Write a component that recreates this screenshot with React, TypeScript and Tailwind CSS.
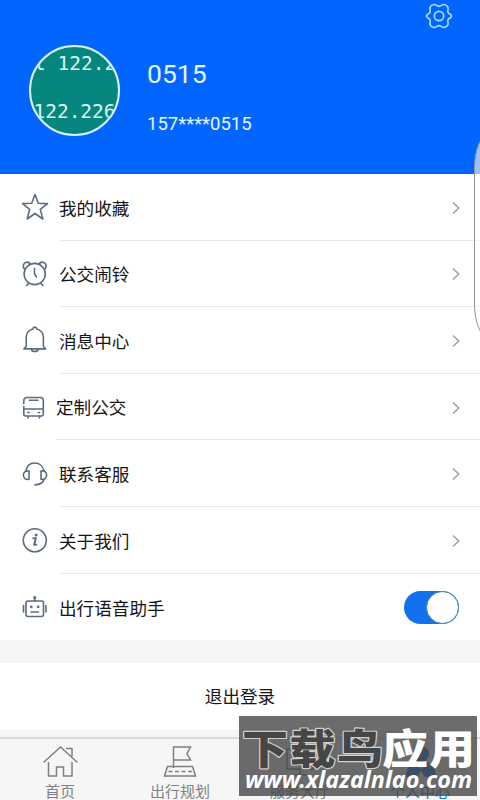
import type { ReactNode } from "react";

const iconProps = {
  viewBox: "0 0 28 28",
  fill: "none",
  stroke: "#5d6b80",
  strokeWidth: 1.6,
  strokeLinecap: "round" as const,
  strokeLinejoin: "round" as const,
  className: "h-7 w-7",
};

function StarIcon() {
  return (
    <svg {...iconProps}>
      <path d="M14 1.5 17.3 10.2 26.5 10.6 19.3 16.4 21.8 26 14 20.5 6.2 26 8.7 16.4 1.5 10.6 10.7 10.2Z" />
    </svg>
  );
}

function AlarmIcon() {
  return (
    <svg {...iconProps}>
      <circle cx="13.7" cy="14" r="10.6" />
      <path d="M13.5 8.5v5.500l2 3M7.300 23.600 5.600 25.500M20.100 23.600l1.700 1.900" />
      <path d="M3.200 8.800C1.300 5.900 2.500 2.500 5.900 2.100c1.600 0 2.900.7 3.600 2M24.200 8.800c1.900-2.900.7-6.300-2.700-6.700-1.600 0-2.900.7-3.600 2" />
    </svg>
  );
}

function BellIcon() {
  return (
    <svg {...iconProps}>
      <path d="M5.200 20.500V11.500a8.900 8.900 0 0 1 6.600-8.600c.2-2.400 3.800-2.400 4 0a8.900 8.900 0 0 1 6.600 8.600v9l2.300 2.400H2.900Z" />
      <path d="M10.300 23.200c.8 3 6.200 3 7 0" />
    </svg>
  );
}

function BusIcon() {
  return (
    <svg {...iconProps} viewBox="0 -1.500 28 28">
      <path d="M2.800 9V6a3 3 0 0 1 3-3h13.500a3 3 0 0 1 3 3v13.500a2 2 0 0 1-2 2H4.800a2 2 0 0 1-2-2v-5h19.500M2.800 12v2.500" />
      <path d="M8.500 5.800h8.500M6.700 18h1.400M17.200 18h1.400M7 22v1.500M18.500 22v1.500" />
    </svg>
  );
}

function HeadsetIcon() {
  return (
    <svg {...iconProps} viewBox="0 -0.500 28 28">
      <path d="M5 10.300C5.800 5.300 9.400 2.500 13.800 2.500s8.200 2.800 9 7.800" />
      <path d="M8 10.500v8.300c-3.300.6-5.600-1-5.600-4.200S4.700 9.900 8 10.500ZM20 10.500v8.300c3.300.6 5.600-1 5.600-4.200s-2.300-4.700-5.600-4.100Z" />
      <path d="M23 18.800c-.8 3.500-3.800 5.400-9 5.600" />
    </svg>
  );
}

function InfoIcon() {
  return (
    <svg {...iconProps} viewBox="0 -0.500 28 28">
      <circle cx="13.800" cy="13.700" r="11.500" />
      <path d="M12.300 11.800h2.500l-1.600 6.500h2" strokeWidth="2" />
      <circle cx="15.200" cy="8.600" r="0.700" fill="#5d6b80" />
    </svg>
  );
}

function RobotIcon() {
  return (
    <svg {...iconProps} viewBox="0 -1.500 28 28">
      <rect x="5" y="6.500" width="17.500" height="15.500" rx="2" />
      <path d="M13.700 6.500V4M2.500 11v6.500M25 11v6.500M10 17.500h7.500" />
      <circle cx="13.700" cy="3" r="0.800" fill="#5d6b80" />
      <circle cx="10.300" cy="12.300" r="0.600" fill="#5d6b80" />
      <circle cx="17.200" cy="12.300" r="0.600" fill="#5d6b80" />
    </svg>
  );
}

function Chevron() {
  return (
    <svg viewBox="0 0 8 14" fill="none" stroke="#a3a3a3" strokeWidth="1.600" className="mr-[20px] h-[14px] w-2">
      <path d="M1 1.500 6.700 7 1 12.500" />
    </svg>
  );
}

function SettingsIcon() {
  return (
    <svg viewBox="0 0 28 28" fill="none" stroke="#a5dcff" strokeWidth="1.700" strokeLinejoin="round" className="h-7 w-7">
      <path d="M9.500 2.500c1.700 0 2.400 1.800 4.500 1.800s2.800-1.800 4.500-1.800c1.800 0 4 1.500 4.500 3 .6 1.800-.8 2.700 0 4.700.8 2 3.500 1.700 3.500 3.800s-2.700 1.800-3.500 3.800.6 2.900 0 4.700c-.5 1.500-2.700 3-4.500 3-1.700 0-2.400-1.800-4.500-1.800s-2.800 1.800-4.500 1.800c-1.800 0-4-1.500-4.500-3-.6-1.800.8-2.700 0-4.700S1.500 16.100 1.500 14s2.700-1.800 3.500-3.800-.6-2.900 0-4.700c.5-1.500 2.700-3 4.500-3Z" />
      <circle cx="14" cy="14" r="4.700" />
    </svg>
  );
}

const rows: { label: string; icon: ReactNode; tight?: boolean; toggle?: boolean }[] = [
  { label: "我的收藏", icon: <StarIcon /> },
  { label: "公交闹铃", icon: <AlarmIcon /> },
  { label: "消息中心", icon: <BellIcon /> },
  { label: "定制公交", icon: <BusIcon />, tight: true },
  { label: "联系客服", icon: <HeadsetIcon /> },
  { label: "关于我们", icon: <InfoIcon /> },
  { label: "出行语音助手", icon: <RobotIcon />, toggle: true },
];

function NavItem({ label, icon, active }: { label: string; icon: ReactNode; active?: boolean }) {
  return (
    <div className={`flex flex-1 flex-col items-center pt-[5px] text-[15px] leading-[18px] ${active ? "text-[#0870d8]" : "text-[#808080]"}`}>
      <div className="mb-[3px] h-[36px] w-[36px]">{icon}</div>
      <span className="whitespace-nowrap">{label}</span>
    </div>
  );
}

function BottomNav() {
  const nav = {
    viewBox: "0 0 36 36",
    fill: "none",
    stroke: "currentColor",
    strokeWidth: 1.5,
    className: "h-9 w-9",
  };

  return (
    <nav className="flex h-[63px] border-t-2 border-[#d9d9d9] bg-[#f6f6f6]">
      <NavItem
        label="首页"
        icon={
          <svg {...nav}>
            <path d="M1.500 18.500 18.500 3l17 15.500M6.500 18v14h8v-9h7v9h8.500V18M24 4.500h6v8" />
          </svg>
        }
      />
      <NavItem
        label="出行规划"
        icon={
          <svg {...nav}>
            <path d="M11.500 24V3h17l-3.500 6.500 3.500 6.500h-17M5.500 22.500h25l3 9.500h-31Z" />
            <path d="M6.500 27.500h24" strokeDasharray="4 2.500" />
          </svg>
        }
      />
      <NavItem
        label="服务大厅"
        icon={
          <svg {...nav}>
            <path d="M5 5h26v20H5ZM18 25v6M11 31h14" />
          </svg>
        }
      />
      <NavItem
        label="个人中心"
        active
        icon={
          <svg viewBox="0 0 36 36" fill="currentColor" className="h-9 w-9">
            <circle cx="19" cy="10" r="8" />
            <path d="M4 33c0-7 3-12 8-15l7 7 7-7c5 3 8 8 8 15h-11l-4-6-4 6Z" />
          </svg>
        }
      />
    </nav>
  );
}

function Watermark() {
  return (
    <div className="absolute top-[716px] left-[239px] h-[80px] w-[238px] bg-[#474747]/80">
      <svg viewBox="0 0 238 80" className="h-full w-full">
        <g
          transform="translate(0 48) scale(1 .88)"
          fontFamily="'Noto Sans CJK SC', sans-serif"
          fontWeight="900"
          fontSize="46"
          strokeLinejoin="round"
        >
          <text x="3" y="0" textLength="141" fill="#464646" stroke="#d0d0d0" strokeWidth="2.600" paintOrder="stroke">下载鸟</text>
          <text x="143" y="0" textLength="93" fill="#fff">应用</text>
        </g>
        <text
          x="6"
          y="72"
          textLength="227"
          lengthAdjust="spacingAndGlyphs"
          fontFamily="'Noto Sans', sans-serif"
          fontWeight="700"
          fontStyle="italic"
          fontSize="24"
          fill="#fff"
        >
          www.xlazalnlao.com
        </text>
      </svg>
    </div>
  );
}

export default function App() {
  return (
    <main className="relative flex h-[800px] w-[480px] flex-col overflow-hidden bg-[#f5f5f5] font-['Roboto','Noto_Sans_CJK_SC',sans-serif] text-[#151515]">
      <header className="flex h-[174px] shrink-0 bg-[#0266fe] text-[#e4f6ff]">
        <div className="mt-[45px] ml-[29px] flex h-[91px] w-[91px] flex-col items-center overflow-hidden rounded-full border-2 border-[#d5f5f5] bg-[#07857f] font-['DejaVu_Sans_Mono',monospace] text-[19.500px] leading-[48px] whitespace-pre text-[#d8f5ee]">
          <span className="-mt-[7px] ml-[13px]">t 122.22</span>
          <span>122.226</span>
        </div>

        <div className="ml-[27px] flex-1">
          <p className="mt-[58px] text-[26.500px] leading-8">0515</p>
          <p className="mt-[22px] text-[18.500px] leading-6">157****0515</p>
        </div>

        <div className="mt-[2px] mr-[27px]">
          <SettingsIcon />
        </div>
      </header>

      <section className="shrink-0 bg-white">
        {rows.map((row) => (
          <div key={row.label} className="flex h-[66.600px] items-center pl-[21px]">
            {row.icon}
            <div
              className={`flex h-full flex-1 items-center justify-between text-[17.600px] ${
                row.tight ? "ml-[7px]" : "ml-[10px]"
              } ${row.toggle ? "pt-[2px]" : "border-b border-[#e8e8e8] pt-[2px]"}`}
            >
              <span className="pt-[2px]">{row.label}</span>
              {row.toggle ? (
                <div className="mr-[21px] flex h-[33px] w-[55px] justify-end rounded-full bg-[#1171ee]">
                  <div className="h-[33px] w-[33px] rounded-full border border-[#4d7fac] bg-white" />
                </div>
              ) : (
                <Chevron />
              )}
            </div>
          </div>
        ))}
      </section>

      <button className="mt-[23px] h-[67px] shrink-0 bg-white pt-[2px] text-[17.600px]">退出登录</button>

      <div className="mt-auto">
        <BottomNav />
      </div>

      {/* edge handle, mostly off screen */}
      <div className="absolute top-[134px] left-[474px] h-[204px] w-[30px] rounded-[15px/34px] border border-[#8f9596] bg-white/60" />

      <Watermark />
    </main>
  );
}
